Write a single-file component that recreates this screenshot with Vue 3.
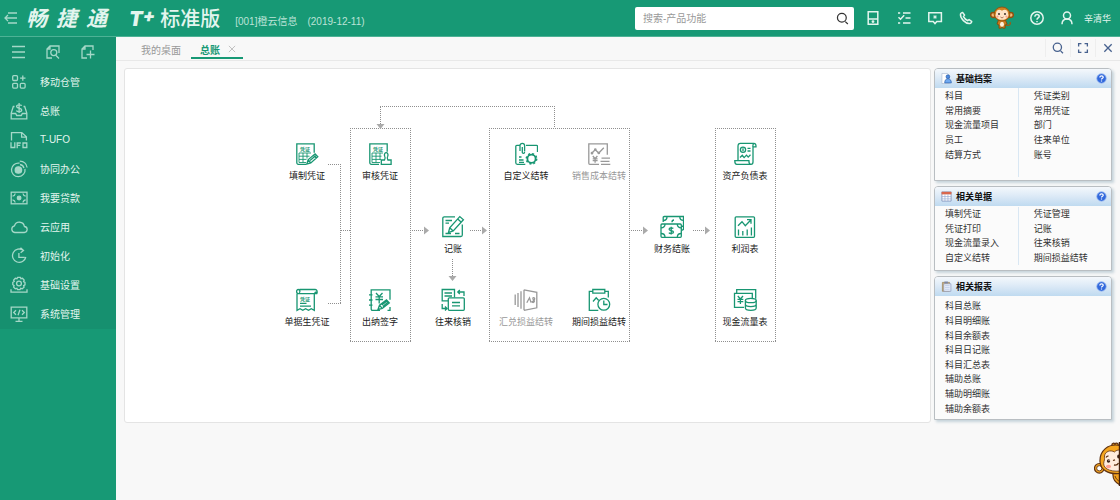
<script setup>
const menu = [
  { icon: 'm-apps', label: '移动仓管' },
  { icon: 'm-ledger', label: '总账' },
  { icon: 'm-ufo', label: 'T-UFO' },
  { icon: 'm-target', label: '协同办公' },
  { icon: 'm-loan', label: '我要贷款' },
  { icon: 'm-cloud', label: '云应用' },
  { icon: 'm-init', label: '初始化' },
  { icon: 'm-gear', label: '基础设置' },
  { icon: 'm-system', label: '系统管理' },
]

const shortcuts = [
  { icon: 't-device', label: '设备' },
  { icon: 't-tasks', label: '任务' },
  { icon: 't-message', label: '消息' },
  { icon: 't-phone', label: '电话' },
]

const nodes = [
  { col: 0, row: 0, icon: 'n-fill', label: '填制凭证', stamp: 9 },
  { col: 1, row: 0, icon: 'n-audit', label: '审核凭证', stamp: 9 },
  { col: 3, row: 0, icon: 'n-custom', label: '自定义结转' },
  { col: 4, row: 0, icon: 'n-sales', label: '销售成本结转', disabled: true },
  { col: 6, row: 0, icon: 'n-balance', label: '资产负债表' },
  { col: 2, row: 1, icon: 'n-post', label: '记账' },
  { col: 5, row: 1, icon: 'n-close', label: '财务结账' },
  { col: 6, row: 1, icon: 'n-profit', label: '利润表' },
  { col: 0, row: 2, icon: 'n-bill', label: '单据生凭证', stamp: 13 },
  { col: 1, row: 2, icon: 'n-sign', label: '出纳签字' },
  { col: 2, row: 2, icon: 'n-verify', label: '往来核销' },
  { col: 3, row: 2, icon: 'n-exchange', label: '汇兑损益结转', disabled: true },
  { col: 4, row: 2, icon: 'n-period', label: '期间损益结转' },
  { col: 6, row: 2, icon: 'n-cash', label: '现金流量表' },
]

const panels = [
  {
    key: 'archives',
    icon: 'p-user',
    title: '基础档案',
    columns: [
      ['科目', '常用摘要', '现金流量项目', '员工', '结算方式'],
      ['凭证类别', '常用凭证', '部门', '往来单位', '账号'],
    ],
  },
  {
    key: 'documents',
    icon: 'p-table',
    title: '相关单据',
    columns: [
      ['填制凭证', '凭证打印', '现金流量录入', '自定义结转'],
      ['凭证管理', '记账', '往来核销', '期间损益结转'],
    ],
  },
  {
    key: 'reports',
    icon: 'p-report',
    title: '相关报表',
    columns: [['科目总账', '科目明细账', '科目余额表', '科目日记账', '科目汇总表', '辅助总账', '辅助明细账', '辅助余额表']],
  },
]

const nodeStyle = (n) => ({ left: `${145 + n.col * 73}px`, top: `${73 + n.row * 73}px` })
</script>

<template>
  <svg class="defs" aria-hidden="true">
    <symbol id="m-apps" viewBox="0 0 18 18">
      <rect x="2.7" y="2.7" width="4.8" height="4.8" rx="1" /><rect x="2.7" y="10.3" width="4.8" height="4.8" rx="1" /><rect x="10.3" y="10.3" width="4.8" height="4.8" rx="1" />
      <path d="M12.8 2.4v5.4M10.1 5.1h5.4" />
    </symbol>
    <symbol id="m-ledger" viewBox="0 0 18 18">
      <path d="M4.5 4.5H3.3L1.2 11v5.8h15.6V11l-2.100-6.500h-1.200M1.200 11.500h4.500l1 2h4.600l1-2h4.500" />
      <path d="M11.700 3.800C11 2.500 6.600 2.300 6.600 4.500s5.100 1.300 5.100 3.500-4.700 2.100-5.300.5M9.100 1v10" />
    </symbol>
    <symbol id="m-ufo" viewBox="0 0 18 18">
      <path d="M1.500 9.500V1.600h10.300l4.600 4.200v3.700M11.600 1.800v4.300h4.600" />
      <path d="M1 11.300v5.200h3.800v-5.200M7.200 17.200v-5.200h3.600M7.200 14.400h3.100M13 12h3.800v4.500H13z" />
    </symbol>
    <symbol id="m-target" viewBox="0 0 18 18">
      <path d="M9.600 3.200A6.800 6.800 0 1 0 15 8.800M9.800 1.200c3.900.2 6.700 2.700 7.300 6.300M10 4.500c2.200.3 3.500 1.500 3.900 3.700" />
      <circle cx="8.400" cy="10" r="3.200" fill="currentColor" />
    </symbol>
    <symbol id="m-loan" viewBox="0 0 18 18">
      <rect x="1.200" y="3.200" width="15.800" height="11.600" />
      <path d="M2.500 7.200C4 7 5 6 5.200 4.500M15.700 7.200C14.200 7 13.200 6 13 4.500M2.500 10.800C4 11 5 12 5.200 13.500M15.700 10.800c-1.500.2-2.500 1.200-2.700 2.700" />
      <circle cx="9.100" cy="9" r="1.800" fill="currentColor" />
    </symbol>
    <symbol id="m-cloud" viewBox="0 0 18 18">
      <path d="M4.800 14.500h9a3 3 0 0 0 .6-6 5.100 5.100 0 0 0-9.900-.7 3.400 3.400 0 0 0 .3 6.700z" />
    </symbol>
    <symbol id="m-init" viewBox="0 0 18 18">
      <path d="M13.200 3.300A6.700 6.700 0 1 0 15.800 10M8.900 6v4.300h5.800M10.500.8l3 2.700-2.900 2.300" />
    </symbol>
    <symbol id="m-gear" viewBox="0 0 18 18">
      <path d="m7.700 1.300 2.600 0 .6 1.400 1.600-.4 1.700 1.800-.6 1.500 1.400.7v2.500l-1.400.8.500 1.500-1.800 1.700-1.600-.5-.7 1.400H7.600l-.7-1.400-1.600.5-1.700-1.700.5-1.600L2.800 8.700V6.300l1.400-.8-.6-1.400 1.700-1.800 1.700.4z" />
      <circle cx="9" cy="7.500" r="2.400" /><path d="M1 13.300v2.900h16v-2.900" />
    </symbol>
    <symbol id="m-system" viewBox="0 0 18 18">
      <path d="M1.200 2.200h15.600v10.600H1.200zM9 13v3M5.500 16.300h7M6 5.300 3.700 7.500 6 9.700M12 5.300l2.300 2.200L12 9.700M10 4.700 8 10.300" />
    </symbol>

    <symbol id="t-device" viewBox="0 0 16 16"><path d="M3.200 1.800h9.600v12.400H3.200zM3.200 9h9.600" /><circle cx="8" cy="11.600" r=".7" fill="currentColor" /></symbol>
    <symbol id="t-tasks" viewBox="0 0 16 16"><path d="M7 3h7.500M9.500 8h5M7 13h7.500M2 3h2.200M2 13h2.200M2.500 7.200l2 2 3.700-3.900" /></symbol>
    <symbol id="t-message" viewBox="0 0 16 16"><path d="M1.800 2.800h12.600v8.800H9.800L8 13.600l-1.800-2H1.800z" /><path d="M8 5v4M6 7h4M6.700 5.700l2.600 2.600M9.300 5.700 6.700 8.300" stroke-width=".8" /></symbol>
    <symbol id="t-phone" viewBox="0 0 16 16"><path d="M2.500 4.200C2 8.500 7.600 14 11.800 13.500c1-.1 2-1.400 1.900-2.100l-2.600-1.800-1.500 1.100C8 9.900 6.300 8.200 5.500 6.600l1-1.600-1.900-2.600c-.7 0-2 .9-2.100 1.800z" /></symbol>
    <symbol id="t-help" viewBox="0 0 16 16"><circle cx="8" cy="8" r="6.200" /><path d="M5.900 6.700c0-3 4.300-2.700 4.300-.2C10.200 8 8 7.900 8 9.700M8 11v1.200" /></symbol>
    <symbol id="t-user" viewBox="0 0 16 16"><circle cx="8" cy="5.500" r="3.500" /><path d="M3 14.200c0-3.500 2-5.300 5-5.300s5 1.800 5 5.300" /></symbol>
    <symbol id="t-search" viewBox="0 0 16 16"><circle cx="7.300" cy="7.200" r="4.700" /><path d="m11 11.300 2.700 2.600" /></symbol>
    <symbol id="t-full" viewBox="0 0 16 16"><path d="M3 6.200V3h3.200M9.800 3H13v3.200M13 9.800V13H9.800M6.200 13H3V9.800" /></symbol>
    <symbol id="t-close" viewBox="0 0 16 16"><path d="m3.800 3.800 8.400 8.400M12.200 3.800l-8.400 8.400" /></symbol>

    <symbol id="n-fill" viewBox="0 0 24 24">
      <path d="M11 22.300H3.300a1.500 1.500 0 0 1-1.500-1.500V1.800h17.400v9" />
      <path d="M4 11h12M4 14.200h10.500M4 17.400h7.500M4 20.500h7M4 11v9.500M8 11v9.500M12 11v5.500" stroke-width=".9" />
      <path d="m11.800 22 1.300-4.200 7-6 2.700 2.900-7 6.200zM13.300 18l2.300 2.600M15 18.500l6.400-5.400M18.500 13l2.700 3" />
    </symbol>
    <symbol id="n-audit" viewBox="0 0 24 24">
      <path d="M11 22.300H3.300a1.500 1.500 0 0 1-1.500-1.500V1.800h17.400v8" />
      <path d="M4 11h11M4 14.200h9.500M4 17.400h9M4 20.500h8M4 11v9.500M8 11v9.500M12 11v7" stroke-width=".9" />
      <path d="M13.300 22.300V18h3.200c1.200-1.600.8-2.500.2-3.700-.9-2.100.3-3.600 1.500-3.600s2.400 1.500 1.500 3.600c-.6 1.200-1 2.100.2 3.700h3.200v4.300z" />
    </symbol>
    <symbol id="n-custom" viewBox="0 0 24 24">
      <path d="M6 3.300H2.800c-.6 0-1 .4-1 1v16.500c0 .9.600 1.500 1.500 1.500h8M12 3.300h10.600c.6 0 .9.400.9.900V10M5 15h2.500M5 18h4.500M5 20.300h5" />
      <path d="M6 9V3.600a2.300 2.300 0 0 1 4.600 0v6M8.300 5v5.200c0 1.700 2.300 1.700 2.300-.2" />
      <circle cx="17.500" cy="16.800" r="4.100" stroke-width="1.800" /><circle cx="17.500" cy="16.800" r="5.200" stroke-width="1.500" stroke-dasharray="2 2.080" />
    </symbol>
    <symbol id="n-sales" viewBox="0 0 24 24">
      <path d="M12 22.300H2.800a1 1 0 0 1-1-1V1.800h18.500v11M5 11l3.200-3.300 3.600 3.300 5-5.300M14.500 16.200H23M13.500 19.300h9M14 22.300h9.300" />
      <circle cx="5" cy="11.200" r=".7" /><circle cx="8.300" cy="7.600" r=".7" /><circle cx="11.800" cy="11" r=".7" />
      <path d="m5.800 14 2.300 2.700L10.400 14M5.700 16.900h4.900M5.700 18.700h4.900M8.100 16.700v4" />
    </symbol>
    <symbol id="n-balance" viewBox="0 0 24 24">
      <path d="M5 18V4.200c0-2 1-2.900 2.300-2.900h13.500c1.500 0 2.300 1.200 2.200 3.500h-3.200M20 4.800V20c0 1.500-.7 2.400-2 2.400H3.800c-1.400 0-2-1.200-2-3.700h14.100c0 2.600.8 3.700 2 3.700M21 1.400c-1 .4-1.200 1.700-1.200 3.400" />
      <circle cx="10" cy="7.800" r="2.600" /><path d="M10 6.300v3M14.500 6.300h3M14.500 9h3" /><path d="m7 15.500 2.300-2.200 1.800 2.300 2.400-2.500 1.700 2 2.300-2.300" />
    </symbol>
    <symbol id="n-post" viewBox="0 0 24 24">
      <path d="M14 1.800H3.300A1.500 1.500 0 0 0 1.800 3.300v18.200h18a1.500 1.500 0 0 0 1.500-1.500V9.500M4.500 5.500H11M4.500 8.200h3.500M14 18.500h4.500M4.500 18.500H10" />
      <path d="m7.500 17.500 1.200-4.700L18.800 1.600l3.600 3.200-10.200 11.100zM8.700 12.800l3.500 3.100M16.700 4l3.600 3.200" />
    </symbol>
    <symbol id="n-close" viewBox="0 0 24 24">
      <path d="M3.200 7V2.500a1 1 0 0 1 1-1h19.300V14a1 1 0 0 1-1 1h-1M7 1.700C7 4 5.700 5.500 3.400 5.500M19.800 1.700c0 2.200 1.200 3.700 3.600 3.700M21.500 11.700c.5-.6 1.200-.7 2-.7M12 7.200c0-1.500.7-2.200 2-2.200" />
      <rect x="1" y="9" width="20.300" height="13.300" rx="1" />
      <path d="M5 9c0 2.300-1.500 3.800-4 3.800M17.300 9c0 2.300 1.500 3.800 4 3.800M5 22.300c0-2.300-1.500-3.800-4-3.800M17.300 22.300c0-2.300 1.500-3.800 4-3.800" />
      <path d="M13.300 13.500c-.8-1-4.200-.9-4.200.7 0 1.800 4.400 1 4.400 2.900 0 1.700-3.700 1.800-4.600.5M11.200 11.800v7.700" />
    </symbol>
    <symbol id="n-profit" viewBox="0 0 24 24">
      <rect x="2.200" y="1.800" width="19.300" height="20.500" rx="1" />
      <path d="m5 10.700 4-4 3.300 4L17.800 5M14 4.700h4v4M5.500 14.500v6M9.800 16v4.500M14.200 14.500v6M18.400 12.500v8" />
    </symbol>
    <symbol id="n-bill" viewBox="0 0 24 24">
      <path d="M2 5.800v16.500l3-1.600 2.800 1.600 2.800-1.600 2.900 1.600 2.800-1.600 3 1.600V5.800M4.500 1.500h15.800c1.500 0 2.500 1.700 1.500 4.200H3.300c-2.200 0-2.300-4.200 0-4.200 1.700 0 2.300 2.600.7 3.200M19.500 5.700c.3-1 1-1.700 2-1.700" />
      <path d="M5 15.300h6.500M5 18.200h11" />
    </symbol>
    <symbol id="n-sign" viewBox="0 0 24 24">
      <path d="M12 22.300H4.500c-.8 0-1.300-.5-1.300-1.300V1.800H22v10M22 19v3.300h-2.500M1 6.800h3.500M1 12h3.500M1 17.200h3.500" />
      <path d="m8 5 3.200 3.500L14.500 5M7.500 8.800h7.500M7.500 11.500h7.500M11.200 8.500v7" />
      <path d="m10 21.500 1.500-4.300 7-5.300 2.800 3-7 5.600zM11.700 17.500l2.300 2.700M13.800 17l5.600-4.200M14.800 18.500l5.500-4.400" />
    </symbol>
    <symbol id="n-verify" viewBox="0 0 24 24">
      <path d="M7.300 12.800H1.200V1.500h12.300v8M3.500 5h7.500M3.500 8h7.500" /><rect x="7.300" y="9.800" width="16" height="12.500" rx="1" />
      <path d="M11 14.500h8M11 17.800h8M23 8V4h-6.200M18.800 2l-2 2 2 2M1.200 16v4.500h4.500M4 18.500l2 2-2 2" />
    </symbol>
    <symbol id="n-exchange" viewBox="0 0 24 24">
      <path d="M10 1.800v20.500M10 1.800l12.800 2.500v15.500L10 22.300M1.200 6.500V17M4 5v14M7 3.300v17.400" />
      <path d="m12.800 14.800 2.700-5 1.500 4.700M18 13.800c3.300-1.400 3.200-4.300 1.600-4.200-1.500.2-.3 2.300.6 3 .8 1.200-1.300 2.800-2.200 1.200z" />
    </symbol>
    <symbol id="n-period" viewBox="0 0 24 24">
      <path d="M6 3.300H2.300v19h9M17.700 3.300h3.600v6.200M5.800 1.500h12v3.700h-12zM6 13.500l3.200-3.700 2.500 2.700" /><circle cx="16.800" cy="16.300" r="5.900" /><path d="M16.800 12.500v4h3.700" />
    </symbol>
    <symbol id="n-cash" viewBox="0 0 24 24">
      <path d="M3.700 5V1.700h19v9M11 19.300H1.500V5.300h17.800V10M4.800 8l2.600 3 2.600-3M4.500 11.300h5.800M4.500 13.700h5.800M7.400 11v5" />
      <ellipse cx="17.800" cy="12.500" rx="5.400" ry="2.200" /><path d="M12.400 12.500v7.600c0 3 10.800 3 10.800 0v-7.600M12.400 16.300c0 3 10.800 3 10.800 0" />
    </symbol>

    <symbol id="p-user" viewBox="0 0 12 12">
      <path d="M1 .5h6l2 2v9H1z" fill="#fff" stroke="#a9b9cf" stroke-width=".7" /><circle cx="7.500" cy="4" r="2" fill="#4d8ae0" stroke="#2359a8" stroke-width=".7" /><path d="M4 10.800c0-3 1.500-4.600 3.600-4.600s3.700 1.600 3.700 4.600z" fill="#71aaf0" stroke="#2359a8" stroke-width=".7" />
    </symbol>
    <symbol id="p-table" viewBox="0 0 12 12">
      <path d="M1 1h10v10H1z" fill="#fff" stroke="#7286b3" stroke-width=".8" /><path d="M.6.900h10.800v2.800H.6z" fill="#d9674d" stroke="none" /><path d="M1 6.100h10M1 8.600h10M4.300 3.700V11M7.600 3.700V11" stroke="#8ea5cf" stroke-width=".7" />
    </symbol>
    <symbol id="p-report" viewBox="0 0 12 12">
      <path d="M1.500 1.500h7.800v9.700H1.500z" fill="#d4b16d" stroke="#8f7b5b" stroke-width=".7" /><path d="M3 3h7.800v8.200H3z" fill="#e8effb" stroke="#8793b9" stroke-width=".7" /><path d="M3.700.6h3.800v2H3.700z" fill="#7c86a4" stroke="none" /><path d="M4.400 5h5M4.400 7h5M4.400 9h5" stroke="#a6b7dc" stroke-width=".6" />
    </symbol>
    <symbol id="p-help" viewBox="0 0 12 12">
      <circle cx="6" cy="6" r="5.200" fill="#3269dc" stroke="#9dbdf2" stroke-width=".8" /><path d="M4.200 4.800c0-2.400 3.700-2.200 3.700-.2C7.900 5.800 6 5.800 6 7.200M6 8.300v1.100" stroke="#fff" stroke-width="1.300" />
    </symbol>
  </svg>

  <div class="app">
    <header class="top">
      <button class="back" type="button" aria-label="收起">
        <svg viewBox="0 0 14 14"><path d="M4 2h9M5 7h8M4 12h9M1 7h4M4 4 1 7l3 3" /></svg>
      </button>
      <div class="brand"><span>畅</span><span>捷</span><span>通</span></div>
      <div class="edition"><b>T<sup>+</sup></b><span>标准版</span></div>
      <div class="account"><span>[001]橙云信息</span><span>(2019-12-11)</span></div>
      <form class="search" @submit.prevent>
        <input type="text" placeholder="搜索-产品功能" aria-label="搜索" />
        <button type="submit" aria-label="搜索"><svg viewBox="0 0 16 16"><use href="#t-search" /></svg></button>
      </form>
      <nav class="tools">
        <button v-for="s in shortcuts" :key="s.icon" type="button" :aria-label="s.label"><svg><use :href="`#${s.icon}`" /></svg></button>
        <button class="pet" type="button" aria-label="助手">
          <svg viewBox="0 0 24 24">
            <path d="M16 19c4 1 5-1 4-3" fill="none" stroke="#9b5a14" stroke-width="1.300" />
            <circle cx="3.200" cy="9" r="2.500" fill="#f2b774" stroke="#92500f" /><circle cx="20.800" cy="9" r="2.500" fill="#f2b774" stroke="#92500f" />
            <path d="M8.500 14 7 18l2 1 0 3.200h2.300l.7-1 .8 1h2.300V19l2-1-1.700-4z" fill="#c87a1e" stroke="#824508" stroke-width=".8" />
            <ellipse cx="12" cy="8" rx="7.900" ry="7" fill="#ce8220" stroke="#8a4b0d" stroke-width=".8" />
            <path d="M12 4.800C9.500 2.500 5.800 4 6 7.500c-1.500 3 1.200 6.300 6 6.300s7.500-3.300 6-6.300c.2-3.500-3.500-5-6-2.700z" fill="#fee3c7" />
            <ellipse cx="12" cy="18.200" rx="2" ry="2.500" fill="#fff0db" />
            <circle cx="9" cy="8" r=".9" fill="#2b1e17" /><circle cx="15" cy="8" r=".9" fill="#2b1e17" />
            <circle cx="7.500" cy="10.600" r="1.100" fill="#f6a391" /><circle cx="16.500" cy="10.600" r="1.100" fill="#f6a391" /><path d="M10.500 11c1 1 2 1 3 0" fill="none" stroke="#90482b" stroke-width=".8" />
          </svg>
        </button>
        <button class="me" type="button" aria-label="帮助"><svg><use href="#t-help" /></svg></button>
        <button class="me" type="button" aria-label="用户"><svg><use href="#t-user" /></svg></button>
        <a class="name" href="#">辛清华</a>
      </nav>
    </header>

    <div class="body">
      <aside class="side">
        <div class="menu">
          <div class="quick">
            <button type="button" aria-label="菜单"><svg viewBox="0 0 16 16"><path d="M2 2.500h13M2 8h13M2 13.500h13" /></svg></button>
            <button type="button" aria-label="查找"><svg viewBox="0 0 16 16"><path d="M7 14H2V5l3-3h9v7M2.500 5H5V2.500M11 11.500l3 3" /><circle cx="8.800" cy="8.600" r="3" /></svg></button>
            <button type="button" aria-label="新增"><svg viewBox="0 0 16 16"><path d="M7 14H2V5l3-3h8v4M2.500 5H5V2.500M10.500 6.500v8M6.500 10.500h8" /></svg></button>
          </div>
          <a v-for="m in menu" :key="m.icon" href="#"><svg><use :href="`#${m.icon}`" /></svg>{{ m.label }}</a>
        </div>
      </aside>

      <main class="main">
        <div class="tabbar">
          <button class="tab" type="button">我的桌面</button>
          <div class="tab active">
            <button type="button">总账</button>
            <button class="x" type="button" aria-label="关闭总账"><svg viewBox="0 0 16 16"><use href="#t-close" /></svg></button>
          </div>
          <div class="window">
            <button type="button" aria-label="搜索"><svg><use href="#t-search" /></svg></button>
            <button type="button" aria-label="全屏"><svg><use href="#t-full" /></svg></button>
            <button type="button" aria-label="关闭"><svg><use href="#t-close" /></svg></button>
          </div>
        </div>

        <div class="content">
          <section class="canvas">
            <svg class="links" viewBox="0 0 660 280" aria-hidden="true">
              <g class="dots">
                <path d="M225 59.500h61M225 272.500h61M225.500 59v214M285.500 59v214" />
                <path d="M364 59.500h141M364 272.500h141M364.500 59v214M504.500 59v214" />
                <path d="M590 59.500h61M590 272.500h61M590.500 59v214M650.500 59v214" />
                <path d="M203 95.500h13M215.500 95v140M203 234.500h13M216 161.500h9M255.500 55V37M255 37.500h175M429.500 37v22" />
                <path d="M287 161.500h12M345 161.500h12M327.500 190v17M506 161.500h12M568 161.500h12" />
              </g>
              <path d="M251.500 55h8l-4 5zM299 157.500v8l5-4zM357 157.500v8l5-4zM323.500 207h8l-4 5zM518 157.500v8l5-4zM580 157.500v8l5-4z" />
            </svg>
            <a v-for="n in nodes" :key="n.icon" href="#" class="node" :class="{ disabled: n.disabled }" :style="nodeStyle(n)">
              <svg viewBox="0 0 24 24">
                <use :href="`#${n.icon}`" />
                <text v-if="n.stamp" class="tiny" x="5" :y="n.stamp">凭证</text>
              </svg>
              <span>{{ n.label }}</span>
            </a>
          </section>

          <aside class="panels">
            <section v-for="p in panels" :key="p.key" class="panel" :class="p.key">
              <h2>
                <svg><use :href="`#${p.icon}`" /></svg>
                <span>{{ p.title }}</span>
                <button type="button" :aria-label="`${p.title}帮助`"><svg><use href="#p-help" /></svg></button>
              </h2>
              <div class="cols">
                <ul v-for="(c, i) in p.columns" :key="i">
                  <li v-for="t in c" :key="t"><a href="#">{{ t }}</a></li>
                </ul>
              </div>
            </section>
          </aside>
        </div>
      </main>
    </div>

    <svg class="mascot" viewBox="0 0 26 44" aria-hidden="true">
      <path d="M19 31c-.5 5 2 9.500 7 12V30z" fill="#f2a01b" stroke="#603313" stroke-width="1.200" />
      <path d="M21 34c1 3 2.500 4.500 5 5.500" fill="none" stroke="#603313" stroke-width=".9" />
      <circle cx="5.300" cy="26.300" r="4.800" fill="#f4a51f" stroke="#603313" stroke-width="1.200" /><circle cx="5.300" cy="26.300" r="2.600" fill="#fff" stroke="#603313" stroke-width=".9" />
      <path d="M18 3.500c-.5-2.500 2.500-3 3-1.200 1-2 4-1 3 1.700z" fill="#f2a01b" stroke="#603313" />
      <path d="M26 3.500C14 1 5.500 9 6 19.500c.4 8 7.500 13 20 12z" fill="#f4a51f" stroke="#603313" stroke-width="1.200" />
      <path d="M26 8.500c-2-1-4 0-5.500 1.500-4-2.500-9.500-.5-10 4-.2 2 .5 3-.5 5.500-2 6.500 5 10.500 16 9.500z" fill="#ffecdd" stroke="#603313" stroke-width=".8" />
      <circle cx="14.500" cy="19" r="1.700" fill="#3b241b" /><circle cx="15" cy="18.400" r=".5" fill="#fff" /><ellipse cx="24.500" cy="14.500" rx="1.300" ry="1.900" fill="#3b241b" />
      <path d="M12 15.500c.5-1 1.500-1.500 2.500-1.300M19 18.500l2-.7" fill="none" stroke="#603313" />
      <ellipse cx="14.500" cy="24.500" rx="2.600" ry="1.800" fill="#ff9e91" /><path d="M20 23c2 .5 3.500 0 4.500-2" fill="none" stroke="#603313" />
      <path d="M25.400 0v44" stroke="#44200d" stroke-width="1.200" />
    </svg>
  </div>
</template>

<style>
html, body { background: #f8f8f8; }
body { margin: 0; }
</style>

<style scoped>
.app {
  min-height: 100vh;
  display: flex;
  flex-direction: column;
  position: relative;
  overflow: hidden;
  font-family: "Liberation Sans", "Noto Sans CJK SC", sans-serif;
  font-size: 10px;
  color: #333;
}
.defs { position: absolute; width: 0; height: 0; }
button { border: 0; padding: 0; background: none; font: inherit; color: inherit; display: flex; align-items: center; justify-content: center; cursor: pointer; }
a { color: inherit; text-decoration: none; }
svg { fill: none; stroke: currentColor; stroke-width: 1.3; flex: none; }
ul { list-style: none; margin: 0; padding: 0; }

.top { display: flex; align-items: center; height: 36px; background: #179975; border-bottom: 1px solid #4db295; color: #e3f5ee; padding-right: 9px; white-space: nowrap; }
.back { margin-left: 4px; color: #a5d8c8; }
.back svg { width: 14px; height: 14px; }
.brand { display: flex; gap: 9px; margin-left: 8px; padding-top: 2px; font-size: 21px; line-height: 34px; font-weight: 700; font-style: italic; }
.edition { display: flex; align-items: center; gap: 5px; margin-left: 22px; font-size: 20px; line-height: 34px; font-weight: 500; padding-top: 2px; }
.edition b { display: flex; font-family: Inter, "Liberation Sans", sans-serif; font-weight: 900; font-style: italic; }
.edition sup { font-size: 18px; line-height: 28px; }
.account { display: flex; align-items: baseline; gap: 10px; margin: 5px 0 0 15px; color: #bce3d7; }
.search { display: flex; flex: 0 1 219px; height: 23px; margin-left: auto; background: #fff; border-radius: 2px; color: #333; }
.search input { flex: 1; min-width: 0; border: 0; outline: 0; padding: 0 0 0 8px; background: none; font: inherit; }
.search input::placeholder { color: #999; }
.search button { width: 22px; }
.search svg { width: 15px; height: 15px; }
.tools { display: flex; align-items: center; margin-left: 4px; }
.tools button { width: 31px; height: 36px; }
.tools svg { width: 16px; height: 16px; stroke-width: 1.5; }
.tools .pet { width: 40px; }
.tools .pet svg { width: 24px; height: 24px; stroke: none; }
.tools .me { width: 30px; }
.name { margin-left: 2px; font-size: 9px; }

.body { flex: 1; display: flex; }
.side { flex: none; width: 116px; background: #179975; color: #e3f5ee; }
.menu { background: #16906f; padding-bottom: 1px; }
.quick { display: flex; height: 30px; padding-left: 10px; gap: 19px; color: #a5d8c8; }
.quick svg { width: 16px; height: 16px; }
.menu a { display: flex; align-items: center; gap: 12px; height: 29px; padding-left: 10px; }
.menu a svg { width: 18px; height: 18px; color: #a5d8c8; }

.main { flex: 1; min-width: 0; background: #f8f8f8; }
.tabbar { display: flex; height: 23px; border-bottom: 1px solid #e8e8e8; padding-left: 15px; }
.tab { padding: 2px 10px 0; color: #999; }
.tab.active { display: flex; gap: 6px; padding: 0 5px 0 9px; border-bottom: 2px solid #179975; color: #179975; font-weight: 700; height: 20px; }
.tab.active button { height: 24px; }
.x svg { width: 12px; height: 12px; color: #bbb; stroke-width: 1.2; }
.window { display: flex; margin-left: auto; color: #47618e; }
.window button { width: 25px; height: 18px; margin-top: 2px; border-left: 1px solid #eee; }
.window svg { width: 14px; height: 14px; stroke-width: 1.5; }

.content { display: flex; align-items: flex-start; gap: 3px; padding: 7px 8px 0; }
.canvas { position: relative; flex: 1; min-width: 0; min-height: 353px; background: #fff; border: 1px solid #e4e4e4; border-radius: 3px; }
.links { display: block; width: 660px; height: 280px; stroke: none; fill: #aaa; }
.dots { fill: none; stroke: #8f8f8f; stroke-width: 1; stroke-dasharray: 1 1; }
.node { position: absolute; width: 74px; display: flex; flex-direction: column; align-items: center; gap: 3px; font-size: 9px; line-height: 14px; white-space: nowrap; color: #222; }
.node svg { width: 24px; height: 24px; color: #189672; }
.node.disabled, .node.disabled svg { color: #999; }
.tiny { font-size: 5px; font-weight: 700; fill: currentColor; stroke: none; }

.panels { flex: none; width: 178px; display: flex; flex-direction: column; gap: 5px; }
.panel { box-sizing: border-box; border: 1px solid #b9bec2; border-radius: 4px 4px 0 0; background: #fbfbfb; box-shadow: 2px 2px 3px #c5d3da; display: flex; flex-direction: column; font-size: 9px; color: #333; }
.panel h2 { display: flex; align-items: center; gap: 4px; height: 19px; margin: 0; padding: 0 4px 0 6px; border-radius: 3px 3px 0 0; background: linear-gradient(#f4f8fc, #dbe9f6 50%, #bfdaf0); font-size: 9px; color: #111; }
.panel h2 span { flex: 1; }
.panel h2 svg { display: block; width: 11px; height: 11px; }
.cols { flex: 1; display: flex; }
.cols ul { box-sizing: border-box; flex: 0 0 47%; display: flex; flex-direction: column; padding-left: 10px; }
.cols ul + ul { flex: 1; border-left: 1px solid #d9e7f3; padding-left: 15px; }
.cols li { flex: 1; display: flex; align-items: center; line-height: 14px; white-space: nowrap; }
.archives { min-height: 113px; }
.archives .cols { margin-bottom: 3px; }
.archives ul { padding-bottom: 15px; padding-top: 1px; }
.documents { min-height: 85px; }
.documents .cols { padding: 1px 0 5px; }
.reports { min-height: 144px; }
.reports .cols { padding: 3px 0; }

.mascot { position: absolute; right: 0; bottom: 14px; width: 26px; height: 44px; stroke: none; }
</style>
